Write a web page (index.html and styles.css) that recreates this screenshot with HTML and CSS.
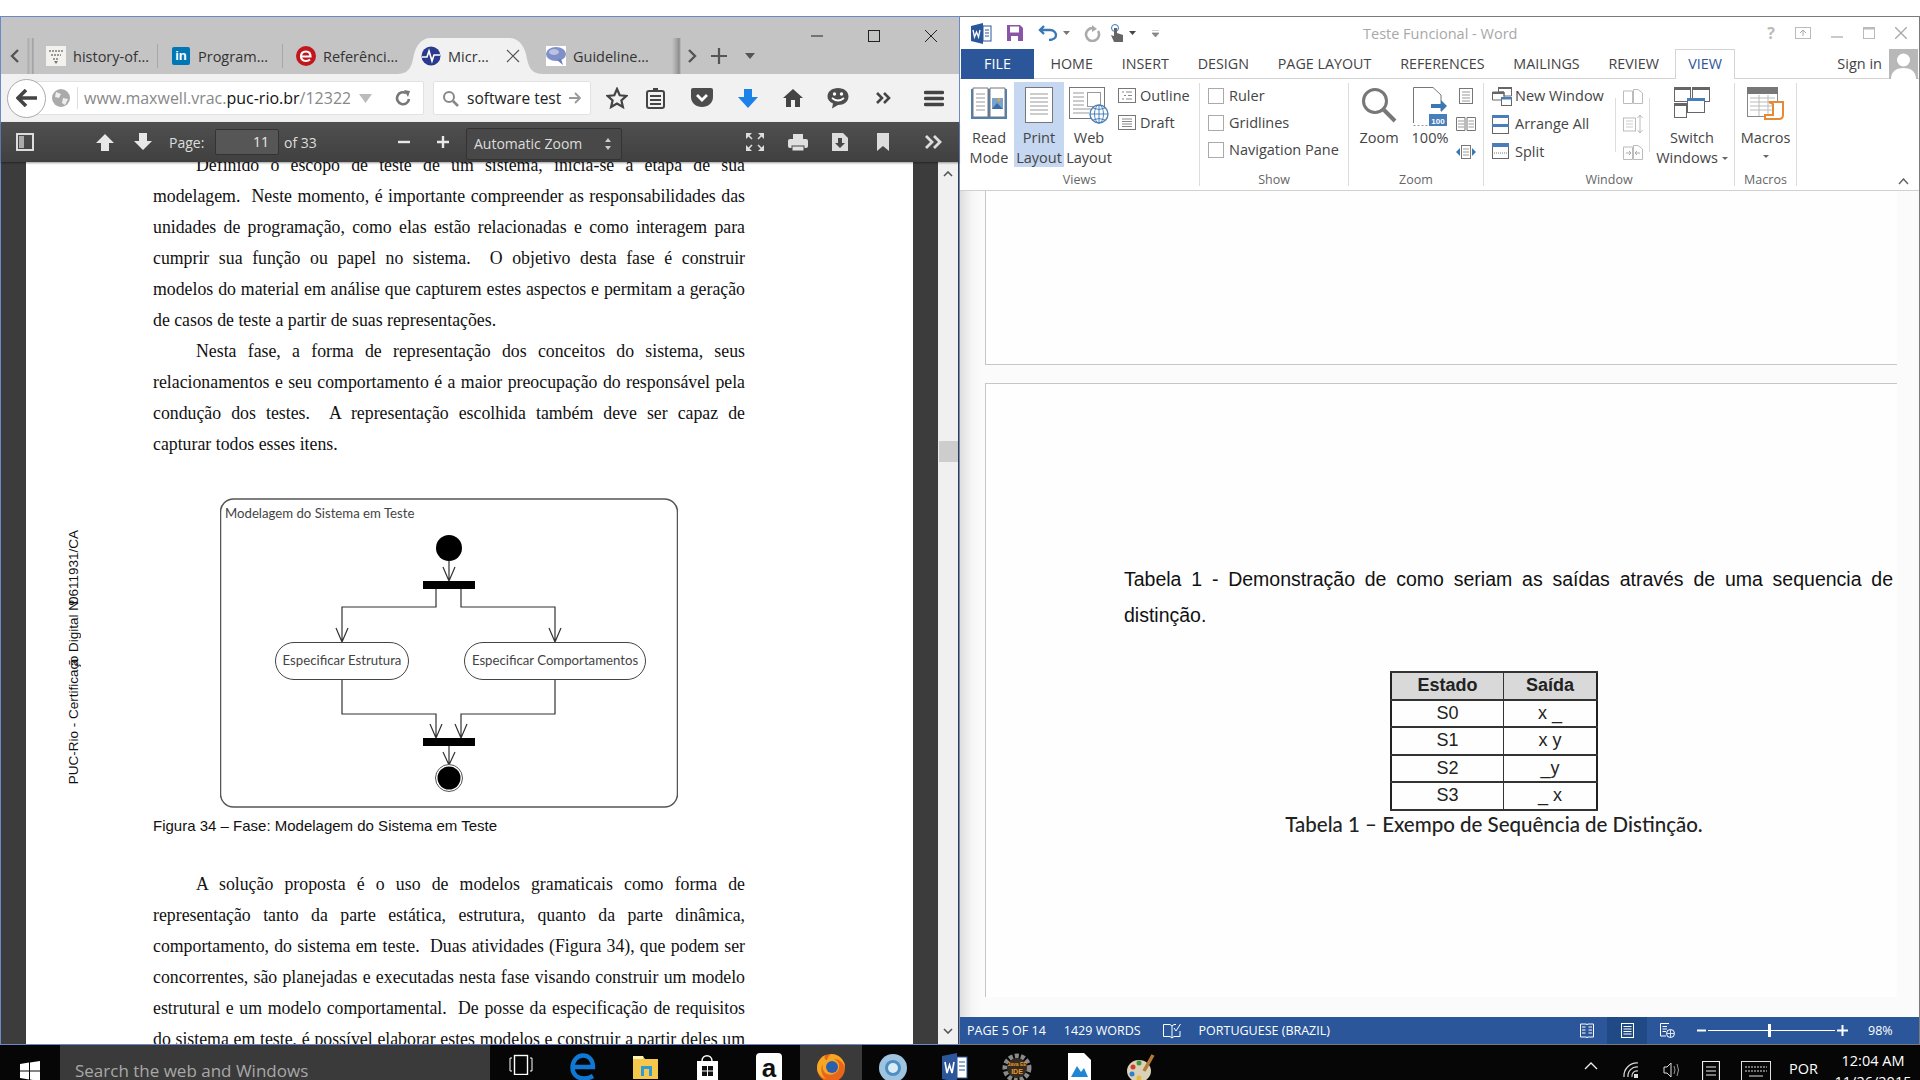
FILE: index.html
```html
<!DOCTYPE html>
<html lang="en">
<head>
    <meta charset="UTF-8">
    <title>Desktop</title>
    <link rel="stylesheet" href="styles.css">
</head>
<body>
<div class="desktop">

    <!-- browser window -->
    <section class="browser">
        <div class="win-controls">
            <svg width="14" height="14"><path d="M1 7H13" stroke="#222"/></svg>
            <svg width="14" height="14"><rect x="1.5" y="1.5" width="11" height="11" fill="none" stroke="#222"/></svg>
            <svg width="14" height="14"><path d="M1 1L13 13M13 1L1 13" stroke="#222"/></svg>
        </div>
        <div class="tabs">
            <div class="tab-scroll left"><svg width="10" height="14"><path d="M8 1L2 7L8 13" fill="none" stroke="#555" stroke-width="2.4"/></svg></div>
            <div class="tab t1">
                <svg class="fav" width="20" height="20"><rect width="20" height="20" fill="#f4f2ee"/><path d="M3 5H17M5 9H15M7 13H13" stroke="#999" stroke-width="2" stroke-dasharray="2 1"/><path d="M8 15L10 18L12 15Z" fill="#777"/></svg>
                <span>history-of…</span>
            </div>
            <div class="tab t2">
                <span class="fav-in">in</span>
                <span>Program…</span>
            </div>
            <div class="tab t3">
                <svg class="fav" width="20" height="20"><circle cx="10" cy="10" r="10" fill="#c3161c"/><path d="M5 10.5H14.5C14.5 7 12.5 5.5 10 5.5C7 5.500 5 7.500 5 10.500C5 13.500 7.500 15 10 15C11.500 15 13 14.500 14 13.500" fill="none" stroke="#fff" stroke-width="2.200"/></svg>
                <span>Referênci…</span>
            </div>
            <div class="tab t4">
                <svg class="fav" width="20" height="20"><circle cx="10" cy="10" r="9.500" fill="#2a3a8c"/><path d="M1 11H6L8 5L11 15L13 9H19" fill="none" stroke="#fff" stroke-width="1.600"/></svg>
                <span>Micr…</span>
                <svg class="tab-close" width="14" height="14"><path d="M1 1L13 13M13 1L1 13" stroke="#555" stroke-width="1.200"/></svg>
            </div>
            <div class="tab t5">
                <svg class="fav" width="20" height="20"><rect width="20" height="20" fill="#fff"/><ellipse cx="10" cy="8" rx="10" ry="7" fill="#7f8fc8"/><ellipse cx="8" cy="6" rx="5" ry="3" fill="#b9c3e6"/><path d="M11 14L17 19L15 13Z" fill="#6a7ab8"/></svg>
                <span>Guideline…</span>
            </div>
            <div class="tab-scroll right"><svg width="10" height="14"><path d="M2 1L8 7L2 13" fill="none" stroke="#555" stroke-width="2.400"/></svg></div>
            <svg class="new-tab" width="16" height="16"><path d="M8 0V16M0 8H16" stroke="#555" stroke-width="2.200"/></svg>
            <svg class="tab-drop" width="10" height="6"><path d="M0 0H10L5 6Z" fill="#555"/></svg>
        </div>

        <div class="nav">
            <div class="back"><svg width="22" height="18"><path d="M10 1L2 9L10 17M2 9H21" fill="none" stroke="#444" stroke-width="3.600"/></svg></div>
            <div class="urlbar">
                <svg class="globe" width="18" height="18"><circle cx="9" cy="9" r="9" fill="#aaa"/><path d="M4 3L9 5L7 9L3 8ZM11 9L16 10L13 16L10 14Z" fill="#eee"/></svg>
                <div class="url"><span>www.maxwell.vrac.</span><b>puc-rio.br</b><span>/12322/12322_4.PDF</span></div>
                <svg class="url-drop" width="13" height="9"><path d="M0 0H13L6.500 9Z" fill="#bbb"/></svg>
                <svg class="reload" width="16" height="16"><path d="M14 9A6 6 0 1 1 11 3" fill="none" stroke="#777" stroke-width="2.600"/><path d="M9 0L15 1L13 7Z" fill="#777"/></svg>
            </div>
            <div class="searchbar">
                <svg width="17" height="17"><circle cx="7" cy="7" r="5" fill="none" stroke="#888" stroke-width="2"/><path d="M11 11L16 16" stroke="#888" stroke-width="2.600"/></svg>
                <span class="query">software test</span>
                <svg width="12" height="12"><path d="M6 1L11 6L6 11M11 6H0" fill="none" stroke="#999" stroke-width="1.800"/></svg>
            </div>
            <div class="nav-icons">
                <svg class="n-star" width="22" height="22" viewBox="0 0 22 22"><path d="M11 2L13.700 8.300L20.500 8.900L15.400 13.400L16.900 20L11 16.500L5.100 20L6.600 13.400L1.500 8.900L8.300 8.300Z" fill="none" stroke="#444" stroke-width="2.200"/></svg>
                <svg class="n-list" width="20" height="21"><rect x="1" y="3" width="17" height="17" rx="2" fill="none" stroke="#444" stroke-width="2"/><path d="M4 8H15M4 12H15M4 16H15" stroke="#444" stroke-width="2"/><rect x="7" y="0" width="5" height="4" fill="#444"/></svg>
                <svg class="n-pocket" width="22" height="20"><path d="M0 2Q0 0 2 0H20Q22 0 22 2V9C22 15 17 19 11 19C5 19 0 15 0 9Z" fill="#4d4d4d"/><path d="M6 7L11 12L16 7" fill="none" stroke="#fff" stroke-width="2.800"/></svg>
                <svg class="n-down" width="20" height="19"><path d="M6 0H14V8H20L10 19L0 8H6Z" fill="#1c82e8"/></svg>
                <svg class="n-home" width="20" height="18"><path d="M10 0L20 9H17V18H12V11H8V18H3V9H0Z" fill="#444"/></svg>
                <svg class="n-smile" width="22" height="21"><path d="M11 0C17 0 21.500 3.500 21.500 8.500C21.500 13.500 17 17 11 17L5 20.500L6 15.500C2.500 14 .5 11.500 .5 8.500C.5 3.500 5 0 11 0Z" fill="#4d4d4d"/><circle cx="7.500" cy="6" r="1.700" fill="#fff"/><circle cx="14.500" cy="6" r="1.700" fill="#fff"/><path d="M5 10Q11 15 17 10" fill="none" stroke="#fff" stroke-width="1.800"/></svg>
                <svg class="n-more" width="15" height="12"><path d="M1 1L6 6L1 11M8 1L13 6L8 11" fill="none" stroke="#444" stroke-width="2.600"/></svg>
                <svg class="n-menu" width="20" height="17"><path d="M1.500 2.500H18.500M1.500 8.500H18.500M1.500 14.500H18.500" stroke="#444" stroke-width="3.400" stroke-linecap="round"/></svg>
            </div>
        </div>

        <div class="pdfbar">
            <svg class="p-side" width="18" height="18"><rect x="1" y="1" width="16" height="16" fill="none" stroke="#ddd" stroke-width="2"/><rect x="3" y="3" width="5" height="12" fill="#aaa"/></svg>
            <svg class="p-up" width="18" height="18"><path d="M9 1L18 10H13V18H5V10H0Z" fill="#e8e8e8"/></svg>
            <svg class="p-down" width="18" height="18"><path d="M9 17L18 8H13V0H5V8H0Z" fill="#e8e8e8"/></svg>
            <span class="p-label">Page:</span>
            <div class="p-input">11</div>
            <span class="p-of">of 33</span>
            <svg class="p-minus" width="12" height="12"><path d="M0 6H12" stroke="#e8e8e8" stroke-width="2.400"/></svg>
            <svg class="p-plus" width="12" height="12"><path d="M0 6H12M6 0V12" stroke="#e8e8e8" stroke-width="2.400"/></svg>
            <div class="p-select">Automatic Zoom<svg width="6" height="12"><path d="M3 0L6 4H0ZM3 12L0 8H6Z" fill="#ccc"/></svg></div>
            <svg class="p-full" width="18" height="18"><path d="M0 0H6L0 6ZM18 0V6L12 0ZM0 18V12L6 18ZM18 18H12L18 12Z" fill="#ddd"/><path d="M2 2L6 6M16 2L12 6M2 16L6 12M16 16L12 12" stroke="#ddd" stroke-width="1.600"/></svg>
            <svg class="p-print" width="20" height="17"><path d="M5 0H15V5H5Z" fill="#e0e0e0"/><rect y="5" width="20" height="9" rx="2" fill="#e0e0e0"/><rect x="4" y="12" width="12" height="5" fill="#e0e0e0" stroke="#474747"/></svg>
            <svg class="p-save" width="16" height="18"><path d="M0 0H11L16 5V18H0Z" fill="#ddd"/><path d="M6 5H10V10H13L8 15L3 10H6Z" fill="#474747"/></svg>
            <svg class="p-mark" width="12" height="18"><path d="M0 0H12V18L6 13L0 18Z" fill="#ddd"/></svg>
            <svg class="p-tools" width="18" height="14"><path d="M1 1L7 7L1 13M9 1L15 7L9 13" fill="none" stroke="#ddd" stroke-width="2.800"/></svg>
        </div>

        <div class="viewer">
            <div class="pdf-page">
                <span class="stamp">PUC-Rio - Certificaç<span class="squeeze">ã</span>o Digital N<span class="squeeze">º</span>0611931/CA</span>
                <div class="pdf-col">
                    <p class="para">
                        <span class="ln first">Definido o escopo de teste de um sistema, inicia-se a etapa de sua</span>
                        <span class="ln">modelagem.&nbsp; Neste momento, é importante compreender as responsabilidades das</span>
                        <span class="ln">unidades de programação, como elas estão relacionadas e como interagem para</span>
                        <span class="ln">cumprir sua função ou papel no sistema.&nbsp; O objetivo desta fase é construir</span>
                        <span class="ln">modelos do material em análise que capturem estes aspectos e permitam a geração</span>
                        <span class="ln end">de casos de teste a partir de suas representações.</span>
                        <span class="ln first">Nesta fase, a forma de representação dos conceitos do sistema, seus</span>
                        <span class="ln">relacionamentos e seu comportamento é a maior preocupação do responsável pela</span>
                        <span class="ln">condução dos testes.&nbsp; A representação escolhida também deve ser capaz de</span>
                        <span class="ln end">capturar todos esses itens.</span>
                    </p>
                    <svg class="diagram" width="458" height="310" viewBox="220 498 458 310">
                        <rect x="220.500" y="499" width="457" height="308" rx="13" fill="#fff" stroke="#555" stroke-width="1.500"/>
                        <text x="225" y="518" class="d-title">Modelagem do Sistema em Teste</text>
                        <ellipse cx="449" cy="548" rx="13" ry="13" fill="#000"/>
                        <g fill="none" stroke="#333" stroke-width="1.200">
                            <path d="M449 561V581M443 567L449 581L455 567"/>
                            <path d="M436 588V607H342V642M336 628L342 642L348 628"/>
                            <path d="M461 588V607H555V642M549 628L555 642L561 628"/>
                            <path d="M342 679V714H436V738M430 724L436 738L442 724"/>
                            <path d="M555 679V714H461V738M455 724L461 738L467 724"/>
                            <path d="M449 745V765M443 752L449 765L455 752"/>
                        </g>
                        <rect x="423" y="581" width="52" height="8" fill="#000"/>
                        <rect x="423" y="738" width="52" height="8" fill="#000"/>
                        <rect x="275.500" y="642.500" width="133" height="37" rx="18.500" fill="#fff" stroke="#444"/>
                        <rect x="464.500" y="642.500" width="181" height="37" rx="18.500" fill="#fff" stroke="#444"/>
                        <text x="342" y="665" text-anchor="middle" class="d-node">Especificar Estrutura</text>
                        <text x="555" y="665" text-anchor="middle" class="d-node">Especificar Comportamentos</text>
                        <circle cx="449" cy="778" r="13.500" fill="#fff" stroke="#555"/>
                        <circle cx="449" cy="778" r="11.500" fill="#000"/>
                    </svg>
                    <p class="fig-caption">Figura 34 – Fase: Modelagem do Sistema em Teste</p>
                    <p class="para">
                        <span class="ln first">A solução proposta é o uso de modelos gramaticais como forma de</span>
                        <span class="ln">representação tanto da parte estática, estrutura, quanto da parte dinâmica,</span>
                        <span class="ln">comportamento, do sistema em teste.&nbsp; Duas atividades (Figura 34), que podem ser</span>
                        <span class="ln">concorrentes, são planejadas e executadas nesta fase visando construir um modelo</span>
                        <span class="ln">estrutural e um modelo comportamental.&nbsp; De posse da especificação de requisitos</span>
                        <span class="ln">do sistema em teste, é possível elaborar estes modelos e construir a partir deles um</span>
                    </p>
                </div>
            </div>
            <div class="scrollbar">
                <svg width="10" height="6"><path d="M1 5L5 1L9 5" fill="none" stroke="#555" stroke-width="1.600"/></svg>
                <div class="thumb"></div>
                <svg width="10" height="6"><path d="M1 1L5 5L9 1" fill="none" stroke="#555" stroke-width="1.600"/></svg>
            </div>
        </div>
    </section>

    <!-- word window -->
    <section class="word">
        <div class="word-title">
            <svg class="q-logo" width="21" height="21"><path d="M0 3L12 0V21L0 18Z" fill="#2b579a"/><rect x="12" y="3" width="8" height="15" fill="#fff" stroke="#2b579a"/><path d="M14 7H18M14 10H18M14 13H18" stroke="#2b579a"/><path d="M2 7L3.500 14L5.500 9L7.500 14L9 7" fill="none" stroke="#fff" stroke-width="1.300"/></svg>
            <svg class="q-save" width="16" height="16"><path d="M0 0H13L16 3V16H0Z" fill="#8a55a6"/><rect x="3" y="1.500" width="9" height="6" fill="#fff"/><rect x="4" y="11" width="7" height="5" fill="#fff"/></svg>
            <svg class="q-undo" width="20" height="16"><path d="M6 1L2 5L6 9M2 5H12C16 5 18 8 18 10C18 13 15 15 11 15" fill="none" stroke="#3a78b5" stroke-width="2.400"/></svg>
            <svg class="q-caret" width="7" height="4"><path d="M0 0H7L3.500 4Z" fill="#777"/></svg>
            <svg class="q-redo" width="17" height="17"><path d="M9 3A6.500 6.500 0 1 0 14 6" fill="none" stroke="#aaa" stroke-width="2.600"/><path d="M8 0V7L13 4Z" fill="#aaa"/></svg>
            <svg class="q-touch" width="14" height="19"><circle cx="5" cy="4" r="3.500" fill="none" stroke="#3a78b5"/><path d="M4 4V12L1 11L4 18H13V11L7 9V4Z" fill="#666"/></svg>
            <svg class="q-caret2" width="7" height="4"><path d="M0 0H7L3.500 4Z" fill="#444"/></svg>
            <svg class="q-more" width="7" height="7"><path d="M0 0H7M0 3H7L3.500 7Z" stroke="#888" fill="#888" stroke-width=".8"/></svg>
            <span class="doc-title">Teste Funcional - Word</span>
            <div class="word-controls">
                <span class="help">?</span>
                <svg width="16" height="12"><rect x=".5" y=".5" width="15" height="11" fill="none" stroke="#bbb"/><path d="M8 9V3M5 6L8 3L11 6" fill="none" stroke="#aaa"/></svg>
                <svg width="12" height="12"><path d="M0 10H12" stroke="#bbb" stroke-width="1.600"/></svg>
                <svg width="12" height="12"><rect x=".5" y=".5" width="11" height="11" fill="none" stroke="#bbb"/><path d="M0 1.500H12" stroke="#bbb" stroke-width="2"/></svg>
                <svg width="12" height="12"><path d="M0 0L12 12M12 0L0 12" stroke="#aaa" stroke-width="1.400"/></svg>
            </div>
        </div>
        <div class="word-tabs">
            <span class="file-tab">FILE</span>
            <span class="w-tab">HOME</span>
            <span class="w-tab">INSERT</span>
            <span class="w-tab">DESIGN</span>
            <span class="w-tab">PAGE LAYOUT</span>
            <span class="w-tab">REFERENCES</span>
            <span class="w-tab">MAILINGS</span>
            <span class="w-tab">REVIEW</span>
            <span class="w-tab active">VIEW</span>
            <span class="signin">Sign in</span>
            <svg class="avatar" width="29" height="30"><rect width="29" height="30" fill="#b8b8b8"/><circle cx="14.500" cy="11" r="6.500" fill="#fff"/><path d="M2 30C2 22 8 19 14.500 19C21 19 27 22 27 30Z" fill="#fff"/></svg>
        </div>
        <div class="ribbon">
            <div class="group g-views">
                <div class="g-body">
                    <div class="big w44">
                        <svg width="38" height="33"><path d="M1 2H37V32H1Z" fill="#4d82b8"/><path d="M3 1H18V30H3ZM20 1H35V30H20Z" fill="#fff" stroke="#777"/><path d="M6 7H15M6 11H15M6 15H15M6 19H15M6 23H15" stroke="#999"/><rect x="22" y="11" width="11" height="11" fill="#7ba3cc"/><circle cx="29" cy="13" r="1.500" fill="#e8a33d"/><path d="M22 22L27 16L33 22Z" fill="#3a6ea5"/></svg>
                        <span>Read<br>Mode</span>
                    </div>
                    <div class="big w50 on">
                        <svg width="28" height="36"><rect x=".5" y=".5" width="27" height="35" fill="#fff" stroke="#777"/><path d="M5 7H23M5 11H23M5 15H23M5 19H23M5 23H23M5 27H23" stroke="#999"/></svg>
                        <span>Print<br>Layout</span>
                    </div>
                    <div class="big w46">
                        <svg width="40" height="37"><rect x=".5" y=".5" width="35" height="31" fill="#fff" stroke="#777"/><rect x="18.500" y="5.500" width="13" height="14" fill="#fff" stroke="#999"/><path d="M4 6H15M4 10H15M4 14H15M4 18H15M4 22H22M4 26H20" stroke="#999"/><circle cx="30" cy="27" r="9" fill="#fff" stroke="#4d82b8" stroke-width="1.400"/><path d="M21 27H39M30 18V36M24 21Q30 24 36 21M24 33Q30 30 36 33" fill="none" stroke="#4d82b8"/><ellipse cx="30" cy="27" rx="4.500" ry="9" fill="none" stroke="#4d82b8"/></svg>
                        <span>Web<br>Layout</span>
                    </div>
                    <div class="small-col">
                        <div class="row">
                            <svg width="18" height="15"><rect x=".5" y=".5" width="17" height="14" fill="#fff" stroke="#777"/><path d="M4 4H6M8 4H14M6 7.500H8M10 7.500H14M4 11H6M8 11H14" stroke="#888"/></svg>
                            <span>Outline</span>
                        </div>
                        <div class="row">
                            <svg width="18" height="15"><rect x=".5" y=".5" width="17" height="14" fill="#fff" stroke="#777"/><path d="M4 4H14M4 6.500H14M4 9H14M4 11.500H14" stroke="#888"/></svg>
                            <span>Draft</span>
                        </div>
                    </div>
                </div>
                <div class="g-label">Views</div>
            </div>

            <div class="group g-show">
                <div class="g-body">
                    <div class="small-col">
                        <label class="check"><i></i>Ruler</label>
                        <label class="check"><i></i>Gridlines</label>
                        <label class="check"><i></i>Navigation Pane</label>
                    </div>
                </div>
                <div class="g-label">Show</div>
            </div>

            <div class="group g-zoom">
                <div class="g-body">
                    <div class="big w40">
                        <svg width="36" height="36"><circle cx="14" cy="14" r="11.500" fill="#fff" stroke="#777" stroke-width="3"/><path d="M23 23L34 34" stroke="#777" stroke-width="4"/></svg>
                        <span>Zoom</span>
                    </div>
                    <div class="big w38 ml12">
                        <svg width="34" height="40"><path d="M.5 36V.5H20L28 8V24" fill="#fff" stroke="#777"/><path d="M.5 38.500H24" stroke="#999" stroke-dasharray="2 2"/><path d="M18 17H28V13L34 19L28 25V21H18Z" fill="#3a78b5"/><rect x="16" y="27" width="18" height="12" fill="#4a7ebb"/><text x="25" y="36.500" text-anchor="middle" class="zoom100">100</text></svg>
                        <span>100%</span>
                    </div>
                    <div class="small-col icons ml10">
                        <div class="row"><svg width="14" height="16"><rect x=".5" y=".5" width="13" height="15" fill="#fff" stroke="#777"/><path d="M3 4H11M3 7H11M3 10H11M3 13H11" stroke="#999"/></svg></div>
                        <div class="row"><svg width="20" height="14"><path d="M.5 .5H9V13.500H.5ZM11 .5H19.500V13.500H11Z" fill="#fff" stroke="#777"/><path d="M2 4H8M2 7H8M2 10H8M12.500 4H18M12.500 7H18M12.500 10H18" stroke="#999"/></svg></div>
                        <div class="row"><svg width="20" height="14"><rect x="5.500" y=".5" width="9" height="13" fill="#fff" stroke="#777"/><path d="M7 4H13M7 7H13M7 10H13" stroke="#999"/><path d="M0 7L4 3V11ZM20 7L16 3V11Z" fill="#3a78b5"/></svg></div>
                    </div>
                </div>
                <div class="g-label">Zoom</div>
            </div>

            <div class="group g-window">
                <div class="g-body">
                    <div class="small-col win-col">
                        <div class="row">
                            <svg width="20" height="19"><path d="M6.500 .5H19.500V9H12V5H6.500ZM.5 5H12V13H.5Z" fill="#fff" stroke="#666"/><path d="M6 0H20V2H6ZM0 5H12V7H0Z" fill="#666"/><rect x="9.500" y="10.500" width="10" height="8" fill="#fff" stroke="#666"/><path d="M9 10H20V12.500H9Z" fill="#4a7ebb"/></svg>
                            <span>New Window</span>
                        </div>
                        <div class="row">
                            <svg width="17" height="19"><rect x=".5" y=".5" width="16" height="18" fill="#fff" stroke="#666"/><path d="M0 0H17V3H0ZM0 9H17V12H0Z" fill="#4a7ebb"/></svg>
                            <span>Arrange All</span>
                        </div>
                        <div class="row">
                            <svg width="17" height="16"><rect x=".5" y=".5" width="16" height="15" fill="#fff" stroke="#666"/><path d="M0 0H17V4H0Z" fill="#4a7ebb"/><path d="M2 10H15" stroke="#777" stroke-dasharray="1 1"/></svg>
                            <span>Split</span>
                        </div>
                    </div>
                    <div class="small-col icons side-col">
                        <div class="row"><svg width="20" height="15"><path d="M.5 2H9.500V14.500H.5ZM10.500 .5H15L19.500 4V14.500H10.500Z" fill="#fff" stroke="#bbb"/></svg></div>
                        <div class="row"><svg width="20" height="20"><rect x=".5" y="4" width="12" height="13" fill="#fff" stroke="#bbb"/><path d="M3 7H10M3 10H10M3 13H10" stroke="#ccc"/><path d="M17 1V19M14.500 4L17 1L19.500 4M14.500 16L17 19L19.500 16" fill="none" stroke="#bbb"/></svg></div>
                        <div class="row"><svg width="20" height="15"><path d="M.5 2H9.500V14.500H.5ZM10.500 .5H15L19.500 4V14.500H10.500Z" fill="#fff" stroke="#bbb"/><path d="M3 8H8M6 6L8 8L6 10M17 8H12M14 6L12 8L14 10" fill="none" stroke="#aaa"/></svg></div>
                    </div>
                    <div class="big w84">
                        <svg width="36" height="33"><rect x=".5" y=".5" width="16" height="14" fill="#fff" stroke="#666"/><rect x="18.500" y=".5" width="17" height="14" fill="#fff" stroke="#666"/><rect x=".5" y="16.500" width="12" height="14" fill="#fff" stroke="#666"/><path d="M0 0H17V3H0ZM18 0H36V3H18ZM0 16H13V19H0Z" fill="#666"/><rect x="13.500" y="11.500" width="17" height="14" fill="#fff" stroke="#666"/><path d="M13 11H31V14H13Z" fill="#4a7ebb"/></svg>
                        <span>Switch<br>Windows<svg class="drop" width="6" height="3"><path d="M0 0H6L3 3Z" fill="#666"/></svg></span>
                    </div>
                </div>
                <div class="g-label">Window</div>
            </div>

            <div class="group g-macros">
                <div class="g-body">
                    <div class="big w60">
                        <svg width="37" height="33"><rect x=".5" y=".5" width="30" height="29" fill="#fff" stroke="#888"/><path d="M0 0H31V7H0Z" fill="#777"/><path d="M3 11H28M3 15H28M3 19H28M3 23H28M12 8V29M21 8V29" stroke="#bbb"/><path d="M22 15H36V28Q36 32 32 32H18V28H26V17Z" fill="#fff" stroke="#e58a35" stroke-width="2"/></svg>
                        <span>Macros</span>
                        <svg class="macro-drop" width="6" height="3"><path d="M0 0H6L3 3Z" fill="#666"/></svg>
                    </div>
                </div>
                <div class="g-label">Macros</div>
            </div>
            <svg class="collapse" width="11" height="7"><path d="M1 6L5.500 1L10 6" fill="none" stroke="#666" stroke-width="1.500"/></svg>
        </div>

        <div class="doc">
            <div class="doc-page top"></div>
            <div class="doc-page main">
                <p class="doc-text">Tabela 1 - Demonstração de como seriam as saídas através de uma sequencia de distinção.</p>
                <div class="table-wrap">
                    <table class="states">
                        <tr><th>Estado</th><th>Saída</th></tr>
                        <tr><td>S0</td><td>x _</td></tr>
                        <tr><td>S1</td><td>x y</td></tr>
                        <tr><td>S2</td><td>_y</td></tr>
                        <tr><td>S3</td><td>_ x</td></tr>
                    </table>
                    <p class="table-caption">Tabela 1 – Exempo de Sequência de Distinção.</p>
                </div>
            </div>
        </div>

        <div class="status">
            <span>PAGE 5 OF 14</span>
            <span class="s-words">1429 WORDS</span>
            <svg class="s-proof" width="18" height="16"><path d="M.5 1.500H7L9 3V15L7 13.500H.5ZM9 3L11 1.500H13M9 15L11 13.500H17V8" fill="none" stroke="#fff"/><path d="M11 5L13 8L17.500 1" fill="none" stroke="#fff"/></svg>
            <span class="s-lang">PORTUGUESE (BRAZIL)</span>
            <div class="s-views">
                <div class="s-view"><svg width="14" height="15"><path d="M.5 1H6.500L7 2L7.500 1H13.500V14H7.500L7 15L6.500 14H.5Z" fill="none" stroke="#fff"/><path d="M2 4H5.500M2 7H5.500M2 10H5.500M8.500 4H12M8.500 7H12M8.500 10H12" stroke="#fff"/></svg></div>
                <div class="s-view on"><svg width="13" height="15"><rect x=".5" y=".5" width="12" height="14" fill="none" stroke="#fff"/><path d="M2.500 3.500H10.500M2.500 6H10.500M2.500 8.500H10.500M2.500 11H10.500" stroke="#fff"/></svg></div>
                <div class="s-view"><svg width="15" height="15"><path d="M9 .5H.5V13H6" fill="none" stroke="#fff"/><path d="M2.500 3.500H7M2.500 6H7M2.500 8.500H6" stroke="#fff"/><circle cx="10.500" cy="10.500" r="4" fill="none" stroke="#fff"/><path d="M7 10.500H14M10.500 7V14" stroke="#fff" stroke-width=".8"/></svg></div>
            </div>
            <svg class="s-minus" width="9" height="9"><path d="M0 4.500H9" stroke="#fff" stroke-width="2"/></svg>
            <div class="slider"><i></i></div>
            <svg class="s-plus" width="11" height="11"><path d="M0 5.500H11M5.500 0V11" stroke="#fff" stroke-width="2"/></svg>
            <span class="s-pct">98%</span>
        </div>
    </section>
</div>

<footer class="taskbar">
    <svg class="start" width="20" height="20"><path d="M0 3L9 1.600V9.500H0ZM10 1.400L20 0V9.500H10ZM0 10.500H9V18.400L0 17ZM10 10.500H20V20L10 18.600Z" fill="#fff"/></svg>
    <div class="task-search">Search the web and Windows</div>
    <div class="task-apps">
        <div class="app"><svg width="24" height="22"><rect x="5.500" y="2.500" width="13" height="19" fill="none" stroke="#fff" stroke-width="1.400"/><path d="M3 5H1V18H3M21 5H23V18H21" fill="none" stroke="#fff"/></svg></div>
        <div class="app"><svg width="26" height="28"><path d="M3 14H23C23 6 18 2.500 13 2.500C7 2.500 2.500 8 2.500 14.500C2.500 22 8 25.500 14 25.500C17.500 25.500 20.500 24.500 23 23" fill="none" stroke="#0f78d4" stroke-width="4.400"/></svg></div>
        <div class="app"><svg width="27" height="26"><path d="M1 3H11L13 6H26V26H1Z" fill="#f5c84c"/><rect x="1" y="3" width="10" height="3" fill="#fff2b8"/><rect x="9" y="13" width="11" height="10" fill="#2f9ad6"/><rect x="12" y="16" width="5" height="10" fill="#f5c84c"/></svg></div>
        <div class="app"><svg width="25" height="29"><path d="M7 8C7 1 17 1 17 8" fill="none" stroke="#fff" stroke-width="1.500"/><path d="M2 8H23V29H2Z" fill="#fff"/><path d="M7 13H12V17.500H7ZM13 13H18V17.500H13ZM7 18.500H12V23H7ZM13 18.500H18V23H13Z" fill="#111"/></svg></div>
        <div class="app"><span class="amazon">a</span></div>
        <div class="app running"><svg width="30" height="30"><circle cx="15" cy="15" r="14" fill="#e8661c"/><path d="M15 1A14 14 0 0 1 29 15C27 8 22 6 18 6C22 8 24 11 23 15C22 20 16 23 11 21C7 19 6 15 7 11C4 15 5 22 10 26C5 24 1 20 1 15C1 9 5 4 9 2C8 5 9 7 11 7C12 4 13 2 15 1Z" fill="#f5a623"/><circle cx="16" cy="14" r="6" fill="#2a5fb0"/></svg></div>
        <div class="app"><svg width="30" height="30"><circle cx="15" cy="15" r="14" fill="#9fc4e0"/><circle cx="15" cy="15" r="8" fill="#4d8fc4"/><circle cx="15" cy="15" r="5" fill="#dcecf6"/></svg></div>
        <div class="app"><svg width="26" height="29"><path d="M0 3L15 0V29L0 26Z" fill="#2b579a"/><rect x="15" y="4" width="10" height="21" fill="#fff" stroke="#2b579a"/><path d="M17 9H23M17 13H23M17 17H23" stroke="#2b579a"/><path d="M3 9L5 20L7.500 12L10 20L12 9" fill="none" stroke="#fff" stroke-width="1.600"/></svg></div>
        <div class="app"><svg width="30" height="30"><circle cx="15" cy="15" r="12" fill="none" stroke="#8a8a8a" stroke-width="5" stroke-dasharray="4 2"/><circle cx="15" cy="15" r="10" fill="#332a22"/><text x="15" y="13" text-anchor="middle" class="ide">Java EE</text><text x="15" y="21" text-anchor="middle" class="ide big-ide">IDE</text></svg></div>
        <div class="app"><svg width="23" height="29"><path d="M0 0H16L23 7V29H0Z" fill="#fff"/><path d="M3 24L9 13L13 19L16 15L20 24Z" fill="#1f86d6"/></svg></div>
        <div class="app"><svg width="30" height="30"><ellipse cx="13" cy="18" rx="12" ry="11" fill="#d9d2b8"/><circle cx="7" cy="14" r="2.500" fill="#d43b2e"/><circle cx="13" cy="10" r="2.500" fill="#3c9a3c"/><circle cx="6" cy="21" r="2.500" fill="#2f7fd1"/><circle cx="13" cy="25" r="2.500" fill="#e8b93a"/><path d="M18 18L27 2" stroke="#b5793a" stroke-width="3.500"/></svg></div>
    </div>
    <div class="tray">
        <div class="tray-item"><svg width="14" height="9"><path d="M1 8L7 2L13 8" fill="none" stroke="#eee" stroke-width="1.300"/></svg></div>
        <div class="tray-item"><svg width="18" height="18"><path d="M2 16A13 13 0 0 1 16 2M6 16A9 9 0 0 1 16 6M10 16A5 5 0 0 1 16 10" fill="none" stroke="#ddd" stroke-width="1.200"/><rect x="12" y="13" width="4" height="4" fill="#ddd"/></svg></div>
        <div class="tray-item"><svg width="16" height="18"><path d="M1 6H4L8 2V16L4 12H1Z" fill="none" stroke="#ddd"/><path d="M11 5Q13 9 11 13M14 3Q17 9 14 15" fill="none" stroke="#999"/></svg></div>
        <div class="tray-item"><svg width="18" height="24"><path d="M.5 .5H17.500V20H11L9 23L7 20H.5Z" fill="none" stroke="#eee" stroke-width="1.200"/><path d="M4 6H14M4 10H14M4 14H14" stroke="#eee"/></svg></div>
        <div class="tray-item kbd"><svg width="30" height="22"><rect x=".5" y=".5" width="29" height="21" fill="none" stroke="#ddd"/><path d="M4 6H26M4 10H26" stroke="#ddd" stroke-dasharray="2 1"/><path d="M8 15H22" stroke="#ddd"/></svg></div>
        <div class="tray-item lang">POR</div>
        <div class="clock"><span>12:04 AM</span><span>11/26/2015</span></div>
    </div>
</footer>
</body>
</html>
```

FILE: styles.css
```css
html, body {
    margin: 0;
    height: 1080px;
    overflow: hidden;
}
body {
    width: 1920px;
    background: #fff;
    font-family: "Open Sans", sans-serif;
    color: #333;
}
svg {
    display: block;
    flex: none;
}
p {
    margin: 0;
}

.desktop {
    display: flex;
    height: 1029px;
    margin-top: 16px;
}

/* browser window */
.browser {
    position: relative;
    width: 960px;
    display: flex;
    flex-direction: column;
    box-sizing: border-box;
    border: 1px solid #6d88c6;
    background: #c4c4c4;
}
.win-controls {
    position: absolute;
    top: 12px;
    right: 21px;
    display: flex;
    gap: 43px;
}
.tabs {
    display: flex;
    align-items: center;
    height: 36px;
    margin-top: 21px;
    font-size: 14.5px;
    color: #333;
}
.tab-scroll {
    display: flex;
    align-items: center;
    height: 36px;
    box-sizing: border-box;
}
.tab-scroll.left {
    width: 33px;
    padding-left: 9px;
    background: linear-gradient(to right, transparent 26px, #aaa 27px, #c8c8c8 30px, #999 32px, #c4c4c4 33px);
}
.tab-scroll.right {
    width: 33px;
    padding-left: 15px;
    background: linear-gradient(to right, #c4c4c4 0, #999 6px, #888 7px, #c4c4c4 9px);
}
.tab {
    display: flex;
    align-items: center;
    gap: 7px;
    height: 36px;
    box-sizing: border-box;
    white-space: nowrap;
}
.t1 { width: 124px; padding-left: 12px; }
.t2 { width: 125px; padding-left: 14px; gap: 8px; }
.t3 { width: 114px; padding-left: 13px; }
.t4 {
    position: relative;
    width: 146px;
    padding-left: 24px;
    background: #f1f1f1;
    clip-path: path("M0 36 C10 36 14 31 16 21 C18 8 24 0 34 0 H112 C122 0 128 8 130 21 C132 31 136 36 146 36 Z");
}
.t5 { width: 129px; padding-left: 3px; }
.t1, .t2 {
    background: linear-gradient(#a8a8a8, #a8a8a8) right 6px / 1px 24px no-repeat;
}
.fav-in {
    width: 18px;
    height: 18px;
    border-radius: 2px;
    background: #0077b5;
    color: #fff;
    font: bold 13px/18px "Liberation Sans", sans-serif;
    text-align: center;
}
.tab-close {
    position: absolute;
    left: 109px;
    top: 11px;
}
.new-tab {
    margin-left: 6px;
}
.tab-drop {
    margin-left: 18px;
}

.nav {
    position: relative;
    display: flex;
    align-items: center;
    height: 48px;
    background: #f1f1f1;
}
.back {
    position: relative;
    z-index: 1;
    display: flex;
    align-items: center;
    justify-content: center;
    width: 37px;
    height: 37px;
    margin-left: 6px;
    border: 1px solid #aaa;
    border-radius: 50%;
    background: #fff;
}
.urlbar {
    display: flex;
    align-items: center;
    width: 395px;
    height: 34px;
    margin-left: -17px;
    box-sizing: border-box;
    padding-left: 22px;
    background: #fff;
    border: 1px solid #e2e2e2;
    border-radius: 2px;
}
.globe {
    margin-right: 7px;
}
.url {
    width: 266px;
    padding-left: 6px;
    border-left: 1px solid #ddd;
    overflow: hidden;
    white-space: nowrap;
    font-size: 16px;
    color: #888;
}
.url b {
    font-weight: 400;
    color: #111;
}
.url-drop {
    margin-left: 9px;
}
.reload {
    margin-left: 23px;
}
.searchbar {
    display: flex;
    align-items: center;
    width: 158px;
    height: 34px;
    margin-left: 9px;
    box-sizing: border-box;
    padding-left: 8px;
    background: #fff;
    border: 1px solid #e2e2e2;
    border-radius: 2px;
}
.query {
    width: 102px;
    margin-left: 8px;
    font-size: 15.5px;
    color: #222;
    white-space: nowrap;
}
.nav-icons {
    display: flex;
    align-items: center;
    margin-left: 15px;
}
.n-list { margin-left: 18px; }
.n-pocket { margin-left: 25px; }
.n-down { margin-left: 25px; }
.n-home { margin-left: 25px; }
.n-smile { margin-left: 24px; }
.n-more { margin-left: 27px; }
.n-menu { margin-left: 33px; }

.pdfbar {
    position: relative;
    z-index: 2;
    display: flex;
    align-items: center;
    height: 40px;
    background: linear-gradient(#4f4f4f, #404040);
    color: #ddd;
    font-size: 14px;
    box-shadow: 0 1px 2px rgba(0, 0, 0, .4);
}
.p-side { margin-left: 15px; }
.p-up { margin-left: 62px; }
.p-down { margin-left: 20px; }
.p-label { margin-left: 17px; width: 46px; }
.p-input {
    width: 64px;
    height: 26px;
    box-sizing: border-box;
    padding-right: 9px;
    text-align: right;
    line-height: 24px;
    color: #e8e8e8;
    background: #565656;
    border: 1px solid #333;
    border-radius: 2px;
}
.p-of { margin-left: 5px; width: 114px; }
.p-plus { margin-left: 27px; }
.p-select {
    display: flex;
    align-items: center;
    justify-content: space-between;
    width: 156px;
    height: 32px;
    margin: 3px 0 0 17px;
    box-sizing: border-box;
    padding: 0 10px 0 7px;
    white-space: nowrap;
    background: #484848;
    border: 1px solid #333;
    border-radius: 2px;
}
.p-full { margin-left: 124px; }
.p-print { margin-left: 24px; }
.p-save { margin-left: 24px; }
.p-mark { margin-left: 29px; }
.p-tools { margin-left: 36px; }

.viewer {
    flex: 1;
    display: flex;
    min-height: 0;
    background: #3c3c3c;
}
.pdf-page {
    position: relative;
    width: 887px;
    margin: 0 25px;
    flex: none;
    background: #fff;
    overflow: hidden;
}
.pdf-col {
    width: 592px;
    margin: -12px 0 0 127px;
}
.para {
    font: 17.800px/31px "Liberation Serif", serif;
    color: #111;
}
.ln {
    display: block;
    text-align: justify;
    text-align-last: justify;
}
.ln.first {
    text-indent: 43px;
}
.ln.end {
    text-align-last: left;
}
.stamp {
    position: absolute;
    left: 40px;
    top: 368px;
    writing-mode: vertical-rl;
    transform: rotate(180deg);
    font: 13.500px/16px "Liberation Sans", sans-serif;
    white-space: nowrap;
    color: #111;
}
.squeeze {
    margin-inline: -4px;
}
.diagram {
    margin: 38px 0 0 67px;
}
.d-title, .d-node {
    font-family: Lato, sans-serif;
    font-size: 13.200px;
    fill: #444;
}
.fig-caption {
    margin-top: 8px;
    font: 15px/20px "Liberation Sans", sans-serif;
    color: #111;
}
.fig-caption + .para {
    margin-top: 33px;
}
.scrollbar {
    display: flex;
    flex-direction: column;
    align-items: center;
    width: 20px;
    flex: none;
    background: #f0f0f0;
}
.scrollbar svg:first-child {
    margin-top: 9px;
}
.scrollbar svg:last-child {
    margin-top: auto;
    margin-bottom: 10px;
}
.thumb {
    width: 19px;
    height: 21px;
    margin-top: 264px;
    background: #cdcdcd;
}

/* word window */
.word {
    width: 960px;
    display: flex;
    flex-direction: column;
    box-sizing: border-box;
    border: 1px solid #7a7a7a;
    border-left: 0;
    background: #fff;
    color: #444;
}
.word-title {
    position: relative;
    display: flex;
    align-items: center;
    height: 32px;
}
.q-logo { margin-left: 11px; }
.q-save { margin-left: 15px; }
.q-undo { margin-left: 15px; }
.q-caret { margin-left: 5px; }
.q-redo { margin-left: 14px; }
.q-touch { margin-left: 9px; }
.q-caret2 { margin-left: 5px; }
.q-more { margin-left: 16px; }
.doc-title {
    position: absolute;
    left: 403px;
    font-size: 14.5px;
    color: #a8a8a8;
}
.word-controls {
    display: flex;
    align-items: center;
    gap: 20px;
    margin-left: auto;
    margin-right: 12px;
}
.help {
    font: bold 16px "Open Sans", sans-serif;
    color: #bbb;
}
.word-tabs {
    position: relative;
    display: flex;
    align-items: center;
    height: 30px;
    font-size: 14.3px;
    color: #444;
}
.word-tabs::after {
    content: "";
    position: absolute;
    left: 0;
    right: 0;
    bottom: 0;
    border-bottom: 1px solid #d4d4d4;
}
.file-tab {
    position: relative;
    z-index: 1;
    width: 73px;
    margin-left: 1px;
    height: 30px;
    line-height: 29px;
    text-align: center;
    color: #fff;
    background: #2b579a;
}
.w-tab {
    padding: 0 14.4px 2px;
}
.file-tab + .w-tab {
    margin-left: 2px;
}
.w-tab.active {
    position: relative;
    z-index: 1;
    height: 30px;
    line-height: 27px;
    margin-left: 2px;
    padding: 0 12px;
    box-sizing: border-box;
    color: #2b579a;
    background: #fff;
    border: 1px solid #d4d4d4;
    border-bottom: 0;
}
.signin {
    margin-left: auto;
    padding-bottom: 2px;
    font-size: 14.5px;
}
.avatar {
    position: relative;
    z-index: 1;
    margin: 0 1px 0 7px;
}
.ribbon {
    position: relative;
    display: flex;
    height: 112px;
    box-sizing: border-box;
    border-bottom: 1px solid #d0d0d0;
    font-size: 14.5px;
    line-height: 20px;
}
.group {
    position: relative;
    box-sizing: border-box;
    padding-top: 3px;
    margin: 4px 0;
    border-right: 1px solid #dcdcdc;
}
.g-views { width: 240px; padding-left: 7px; }
.g-show { width: 149px; padding-left: 8px; }
.g-zoom { width: 135px; padding-left: 10px; }
.g-window { width: 251px; padding-left: 8px; }
.g-macros { width: 62px; }
.g-body {
    display: flex;
    margin-top: -4px;
}
.g-label {
    position: absolute;
    left: 0;
    right: 0;
    bottom: -2px;
    text-align: center;
    font-size: 12.500px;
    line-height: 16px;
    color: #666;
}
.big {
    display: flex;
    flex-direction: column;
    align-items: center;
    height: 85px;
    box-sizing: border-box;
    text-align: center;
    white-space: nowrap;
}
.big > svg:first-child {
    height: 46px;
    padding-top: 5px;
    box-sizing: border-box;
    overflow: visible;
}
.w38 { width: 38px; }
.w40 { width: 40px; }
.w44 { width: 44px; }
.w46 { width: 46px; }
.w50 { width: 50px; margin: 0 2px 0 3px; }
.w60 { width: 62px; }
.w84 { width: 84px; }
.big.on {
    background: #c5d7f1;
}
.ml12 { margin-left: 12px; }
.ml10 { margin-left: 10px; }
.small-col {
    display: flex;
    flex-direction: column;
    margin-left: 6px;
}
.g-show .small-col {
    margin-left: 0;
}
.row, .check {
    display: flex;
    align-items: center;
    gap: 4px;
    height: 27px;
    white-space: nowrap;
}
.check {
    gap: 5px;
}
.check i {
    width: 14px;
    height: 14px;
    background: #fff;
    border: 1px solid #aaa;
}
.win-col .row, .icons .row {
    height: 28px;
}
.win-col {
    width: 123px;
    margin-left: 0;
}
.win-col .row {
    gap: 0;
}
.win-col .row svg {
    width: 23px;
    padding-right: 3px;
    box-sizing: border-box;
    height: 19px;
    overflow: visible;
}
.icons {
    align-items: center;
    width: 22px;
}
.side-col {
    width: 35px;
    margin-left: 0;
    background:
        linear-gradient(#dcdcdc, #dcdcdc) left 16px / 1px 54px no-repeat,
        linear-gradient(#dcdcdc, #dcdcdc) right 16px / 1px 54px no-repeat;
}
.drop {
    display: inline-block;
    margin: 0 0 3px 4px;
}
.macro-drop {
    margin-top: 7px;
}
.zoom100 {
    font: bold 8px "Liberation Sans", sans-serif;
    fill: #fff;
}
.collapse {
    position: absolute;
    right: 10px;
    bottom: 5px;
}

.doc {
    flex: 1;
    min-height: 0;
    box-sizing: border-box;
    padding-left: 25px;
    background: linear-gradient(to right, #dedede, #f6f6f6 12px, #fbfbfb 22px);
    overflow: hidden;
}
.doc-page {
    width: 912px;
    box-sizing: border-box;
    background: #fefefe;
    border-left: 1px solid #c6c6c6;
}
.doc-page.top {
    height: 174px;
    border-bottom: 1px solid #c6c6c6;
}
.doc-page.main {
    height: 614px;
    margin-top: 18px;
    padding: 178px 4px 0 138px;
    border-top: 1px solid #c6c6c6;
}
.doc-text {
    font: 19.500px/35.500px "Liberation Sans", sans-serif;
    text-align: justify;
    color: #111;
}
.table-wrap {
    width: 460px;
    margin: 38px 0 0 140px;
}
.states {
    width: 208px;
    margin: 0 auto;
    border-collapse: collapse;
    border: 2px solid #222;
    font: 18px "Liberation Sans", sans-serif;
    color: #222;
    text-align: center;
}
.states th, .states td {
    height: 25.500px;
    padding: 0;
    border: 1px solid #333;
    border-width: 2px 1px;
}
.states th {
    background: #d9d9d9;
}
.states th:first-child {
    width: 111px;
}
.table-caption {
    margin-top: 0;
    font: 500 20.500px/26px Lato, sans-serif;
    text-align: center;
    color: #222;
}
.status {
    display: flex;
    align-items: center;
    height: 27px;
    padding-left: 7px;
    background: #2b579a;
    color: #fff;
    font-size: 12.500px;
}
.s-words { margin-left: 18px; }
.s-proof { margin-left: 22px; }
.s-lang { margin-left: 18px; }
.s-views {
    display: flex;
    margin-left: auto;
}
.s-view {
    display: flex;
    align-items: center;
    justify-content: center;
    width: 40px;
    height: 27px;
}
.s-view.on {
    background: #1f4a86;
}
.s-minus { margin-left: 10px; }
.slider {
    position: relative;
    width: 127px;
    height: 1px;
    margin-left: 2px;
    background: #fff;
}
.slider i {
    position: absolute;
    left: 60px;
    top: -6px;
    width: 3px;
    height: 13px;
    background: #fff;
}
.s-plus { margin-left: 2px; }
.s-pct {
    width: 71px;
    padding-left: 20px;
    box-sizing: border-box;
}

/* taskbar */
.taskbar {
    display: flex;
    height: 35px;
    overflow: hidden;
    background: #060606;
    color: #fff;
}
.start {
    margin: 16px 20px 0;
}
.task-search {
    width: 430px;
    box-sizing: border-box;
    padding: 14px 0 0 15px;
    background: #3a3a3a;
    color: #a8a8a8;
    font-size: 17px;
    white-space: nowrap;
}
.task-apps {
    display: flex;
}
.app {
    display: flex;
    justify-content: center;
    width: 62px;
    padding-top: 8px;
    box-sizing: border-box;
}
.app.running {
    background: #3a3a3a;
}
.amazon {
    width: 26px;
    height: 34px;
    border-radius: 4px;
    background: #fff;
    color: #111;
    font: bold 26px/30px "Liberation Sans", sans-serif;
    text-align: center;
}
.ide {
    font: bold 5px "Liberation Sans", sans-serif;
    fill: #e89a2c;
}
.big-ide {
    font-size: 7px;
}
.tray {
    display: flex;
    margin-left: auto;
}
.tray-item {
    display: flex;
    justify-content: center;
    width: 40px;
    padding-top: 16px;
    box-sizing: border-box;
}
.tray-item.kbd {
    width: 50px;
}
.tray-item.lang {
    width: 45px;
    padding-top: 14px;
    font-size: 14.500px;
}
.clock {
    display: flex;
    flex-direction: column;
    align-items: center;
    width: 94px;
    font-size: 14.500px;
    line-height: 21px;
    margin-top: 5px;
}
```
